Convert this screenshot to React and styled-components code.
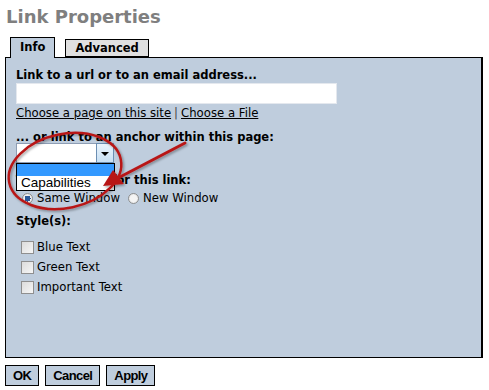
import styled, { createGlobalStyle } from 'styled-components'

const Global = createGlobalStyle`
  html, body { margin: 0; padding: 0; background: #fff; }
  body { font-family: "DejaVu Sans", Verdana, sans-serif; color: #000; }
`

const Page = styled.div`
  position: relative;
  width: 489px;
  height: 390px;
  padding: 6px 6px 0 5px;
  box-sizing: border-box;
  overflow: hidden;
`

const Title = styled.h1`
  margin: 0 0 0 1px;
  font-size: 18px;
  font-weight: bold;
  color: #7f7f7f;
  line-height: 22px;
`

const Tabs = styled.div`
  display: flex;
  align-items: flex-start;
  gap: 10px;
  margin: 9px 0 0 5px;
  position: relative;
  z-index: 1;
`

const Tab = styled.div`
  padding: 0 9px;
  box-sizing: border-box;
  border: 1px solid #000;
  border-bottom: ${p => (p.$active ? 'none' : '1px solid #000')};
  background: ${p => (p.$active ? '#bfcddd' : '#e0e0e0')};
  font-size: 11.5px;
  font-weight: bold;
  line-height: ${p => (p.$active ? '19px' : '16px')};
  margin-top: ${p => (p.$active ? '0' : '2px')};
  height: ${p => (p.$active ? '21px' : '18px')};
`

const Panel = styled.div`
  margin-top: -1px;
  height: 301px;
  box-sizing: border-box;
  border: 1px solid #000;
  border-right-width: 2px;
  background: #bfcddd;
  padding: 9px 10px;
  display: flex;
  flex-direction: column;
`

const Label = styled.div`
  font-size: 11.5px;
  font-weight: bold;
  line-height: 16px;
  margin-top: ${p => p.$top || 0}px;
`

const TextBox = styled.div`
  width: 321px;
  height: 21px;
  box-sizing: border-box;
  background: #fff;
  border: 1px solid #e4e8ee;
  margin-top: 0;
`

const LinkRow = styled.div`
  font-size: 11.7px;
  line-height: 16px;
  margin-top: 1px;
  a { color: #000; text-decoration: underline; }
`

const Sep = styled.span`
  color: #444;
  margin: 0 3px;
`

const SelectWrap = styled.div`
  position: relative;
  width: 98px;
  margin-top: -2px;
`

const SelectBox = styled.div`
  display: flex;
  height: 20px;
  box-sizing: border-box;
  border: 1px solid #8d9db4;
  background: #fff;
`

const SelectField = styled.div`
  flex: 1;
`

const SelectArrow = styled.div`
  width: 16px;
  border: 1px solid #6c8fb3;
  background: linear-gradient(#eaf4fc, #c8e0f4);
  display: flex;
  align-items: center;
  justify-content: center;
  margin: -1px -1px -1px 0;
  &::after {
    content: '';
    border-left: 4px solid transparent;
    border-right: 4px solid transparent;
    border-top: 4px solid #000;
    margin-top: 1px;
  }
`

const DropList = styled.div`
  position: absolute;
  top: 20px;
  left: 0;
  width: 99px;
  box-sizing: border-box;
  border: 1px solid #000;
  background: #fff;
  z-index: 2;
`

const DropItem = styled.div`
  height: ${p => (p.$selected ? '12px' : '14px')};
  background: ${p => (p.$selected ? '#3399ff' : '#fff')};
  font-family: "Liberation Sans", Arial, sans-serif;
  font-size: 13.5px;
  line-height: 14px;
  padding-left: 4px;
`

const RadioRow = styled.div`
  display: flex;
  align-items: center;
  font-size: 11.7px;
  line-height: 13px;
  margin-top: 4px;
  margin-left: 6px;
`

const Option = styled.label`
  display: flex;
  align-items: center;
  gap: 4px;
  margin-right: 8px;
`

const Radio = styled.span`
  width: 11px;
  height: 11px;
  border-radius: 50%;
  border: 1px solid #8e8f8f;
  background: radial-gradient(circle at 50% 50%, ${p => (p.$on ? '#2b5a9a 0 3px, ' : '')}#f4f4f4 3px, #d8d8d8);
  box-sizing: border-box;
`

const Checks = styled.div`
  display: flex;
  flex-direction: column;
  gap: 7px;
  margin-top: 12px;
  margin-left: 5px;
`

const CheckRow = styled.label`
  display: flex;
  align-items: center;
  gap: 3px;
  font-size: 11.7px;
  line-height: 13px;
`

const Box = styled.span`
  width: 13px;
  height: 13px;
  box-sizing: border-box;
  border: 1px solid #8f8f8f;
  background: linear-gradient(135deg, #dcdcdc, #f6f6f6);
`

const Buttons = styled.div`
  display: flex;
  gap: 6px;
  margin-top: 7px;
`

const Button = styled.button`
  height: 21px;
  padding: 0 7px;
  border: 1px solid #000;
  background: #bfcddd;
  font-family: "Liberation Sans", Arial, sans-serif;
  font-weight: bold;
  font-size: 13px;
  letter-spacing: -0.6px;
  line-height: 19px;
  color: #000;
`

const Annotation = styled.svg`
  position: absolute;
  left: 0;
  top: 0;
  pointer-events: none;
  z-index: 3;
`

export default function App() {
  return (
    <>
      <Global />
      <Page>
        <Title>Link Properties</Title>
        <Tabs>
          <Tab $active>Info</Tab>
          <Tab>Advanced</Tab>
        </Tabs>
        <Panel>
          <Label>Link to a url or to an email address...</Label>
          <TextBox />
          <LinkRow>
            <a>Choose a page on this site</a>
            <Sep>|</Sep>
            <a>Choose a File</a>
          </LinkRow>
          <Label $top={8}>... or link to an anchor within this page:</Label>
          <SelectWrap>
            <SelectBox>
              <SelectField />
              <SelectArrow />
            </SelectBox>
            <DropList>
              <DropItem $selected />
              <DropItem>Capabilities</DropItem>
            </DropList>
          </SelectWrap>
          <Label $top={9}>Target display for this link:</Label>
          <RadioRow>
            <Option><Radio $on />Same Window</Option>
            <Option><Radio />New Window</Option>
          </RadioRow>
          <Label $top={8}>Style(s):</Label>
          <Checks>
            <CheckRow><Box />Blue Text</CheckRow>
            <CheckRow><Box />Green Text</CheckRow>
            <CheckRow><Box />Important Text</CheckRow>
          </Checks>
        </Panel>
        <Buttons>
          <Button>OK</Button>
          <Button>Cancel</Button>
          <Button>Apply</Button>
        </Buttons>
        <Annotation width="489" height="390" viewBox="0 0 489 390">
          <defs>
            <filter id="sh" x="-20%" y="-20%" width="140%" height="140%">
              <feDropShadow dx="1.5" dy="1.5" stdDeviation="1" floodColor="#000" floodOpacity="0.35" />
            </filter>
          </defs>
          <g filter="url(#sh)" stroke="#b81818" fill="none">
            <ellipse cx="65" cy="171" rx="57" ry="37" transform="rotate(-12 65 171)" strokeWidth="2.5" />
            <line x1="185" y1="143" x2="118" y2="178" strokeWidth="3" strokeLinecap="round" />
            <polygon points="103,186 113,170 124,184" fill="#b81818" stroke="none" />
          </g>
        </Annotation>
      </Page>
    </>
  )
}
